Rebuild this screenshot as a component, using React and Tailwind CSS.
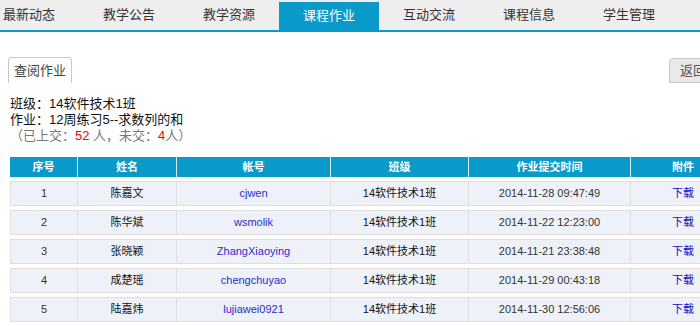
import React from "react";

const tabs = ["最新动态", "教学公告", "教学资源", "课程作业", "互动交流", "课程信息", "学生管理"];
const cols = [
  { t: "序号", w: "w-[67px]" },
  { t: "姓名", w: "w-[99px]" },
  { t: "帐号", w: "w-[154px]" },
  { t: "班级", w: "w-[138px]" },
  { t: "作业提交时间", w: "w-[162px]" },
  { t: "附件", w: "w-[105px]" },
];
const rows = [
  ["1", "陈嘉文", "cjwen", "2014-11-28 09:47:49"],
  ["2", "陈华斌", "wsmolik", "2014-11-22 12:23:00"],
  ["3", "张晓颖", "ZhangXiaoying", "2014-11-21 23:38:48"],
  ["4", "成楚瑶", "chengchuyao", "2014-11-29 00:43:18"],
  ["5", "陆嘉炜", "lujiawei0921", "2014-11-30 12:56:06"],
];

const cjk = { fontFamily: '"Liberation Sans", "Noto Sans CJK SC", sans-serif' };

export default function App() {
  return (
    <div className="w-[700px] h-[326px] overflow-hidden bg-white" style={cjk}>
      <div className="h-[32px] bg-[#eeeeee] border-b-2 border-[#0a9ac9] flex overflow-hidden">
        <div className="flex ml-[-21px] shrink-0">
          {tabs.map((t, i) => (
            <div
              key={t}
              className={
                "w-[100px] shrink-0 flex items-center justify-center text-[13px] " +
                (i === 3 ? "bg-[#0a9ac9] text-white mt-[2px]" : "text-[#333]")
              }
            >
              {t}
            </div>
          ))}
        </div>
      </div>

      <div className="flex justify-between mt-[25px] h-[26px]">
        <div className="ml-[8px] w-[64px] border border-b-0 border-[#c8c8c8] rounded-t-[4px] flex items-center justify-center text-[13px] text-[#444]">
          查阅作业
        </div>
        <div className="mt-[1px] w-[50px] mr-[-19px] bg-[#e9e9e9] border border-[#c8c8c8] rounded-tl-[4px] flex items-center pl-[10px] text-[13px] text-[#555]">
          返回
        </div>
      </div>

      <div className="mt-[13px] ml-[10px] text-[13px] leading-[16px] text-[#111]">
        <div>班级：14软件技术1班</div>
        <div>作业：12周练习5--求数列的和</div>
        <div className="text-[#777]">
          （已上交：<span className="text-[#f00]">52</span> 人，未交：<span className="text-[#f00]">4</span>人）
        </div>
      </div>

      <div className="mt-[13px] ml-[10px] flex flex-col gap-[4px] w-[725px]">
        <div className="flex h-[20px] bg-[#0a9ac9]">
          {cols.map((c, i) => (
            <div
              key={c.t}
              className={
                c.w +
                " shrink-0 flex items-center justify-center text-white font-bold text-[11px] " +
                (i > 0 ? "border-l border-[#d9eef6]" : "")
              }
            >
              {c.t}
            </div>
          ))}
        </div>
        {rows.map((r) => (
          <div key={r[0]} className="flex h-[25px] bg-[#eef2f8] border-t border-b border-l border-[#dedede] text-[11px]">
            <div className="w-[66px] shrink-0 flex items-center justify-center text-[#333]">{r[0]}</div>
            <div className="w-[99px] shrink-0 flex items-center justify-center text-[#111] border-l border-[#dedede]">{r[1]}</div>
            <div className="w-[154px] shrink-0 flex items-center justify-center text-[#2a2ad0] border-l border-[#dedede]">{r[2]}</div>
            <div className="w-[138px] shrink-0 flex items-center justify-center text-[#111] border-l border-[#dedede]">14软件技术1班</div>
            <div className="w-[162px] shrink-0 flex items-center justify-center text-[#333] border-l border-[#dedede]">{r[3]}</div>
            <div className="w-[105px] shrink-0 flex items-center justify-center text-[#1010c0] border-l border-[#dedede]">下载</div>
          </div>
        ))}
      </div>
    </div>
  );
}
